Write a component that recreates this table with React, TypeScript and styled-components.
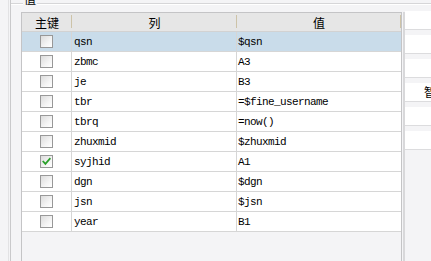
import React from "react";
import styled, { createGlobalStyle } from "styled-components";

const GlobalStyle = createGlobalStyle`
  html, body { margin: 0; padding: 0; background: #f4f4f6; overflow: hidden; }
  * { box-sizing: border-box; }
`;

const CJK = `"Noto Sans CJK SC", "Noto Sans", sans-serif`;
const MONO = `"Liberation Mono", "DejaVu Sans Mono", monospace`;

const Page = styled.div`
  width: 431px;
  height: 261px;
  overflow: hidden;
  display: flex;
  padding-left: 8px;
  background: #f4f4f6;
`;

const OuterEdge = styled.div`
  flex: 1;
  min-width: 0;
  display: flex;
  border-left: 1px solid #e2e2e4;
  padding-left: 1px;
`;

const GroupBox = styled.div`
  flex: 1;
  min-width: 0;
  display: flex;
  flex-direction: column;
  border-left: 1px solid #c9c9cb;
`;

const TitleRow = styled.div`
  display: flex;
  height: 12px;
  flex-shrink: 0;
`;

const EtchLine = styled.div<{ $grow?: boolean }>`
  ${(p) => (p.$grow ? "flex: 1;" : "width: 12px;")}
  height: 0;
  margin-top: 3px;
  border-top: 1px solid #d6d6d8;
  border-bottom: 1px solid #ffffff;
`;

const Title = styled.span`
  font-family: ${CJK};
  font-size: 12px;
  line-height: 12px;
  margin-top: -7px;
  padding: 0 1px;
  color: #000;
`;

const Content = styled.div`
  flex: 1;
  display: flex;
  min-height: 0;
  padding-left: 10px;
`;

const TableFrame = styled.div`
  width: 381px;
  flex-shrink: 0;
  display: flex;
  flex-direction: column;
  border: 1px solid #c4c4c6;
  border-bottom: none;
  background: #f4f4f6;
`;

const COLS = "50px 165px 164px";

const HeaderRow = styled.div`
  display: grid;
  grid-template-columns: ${COLS};
  height: 19px;
  background: #e6e6e6;
  border-bottom: 1px solid #d2d2d2;
`;

const HeaderCell = styled.div`
  display: flex;
  align-items: center;
  justify-content: center;
  font-family: ${CJK};
  font-size: 12px;
  color: #000;
  background: linear-gradient(#cdc3a8, #cdc3a8) no-repeat right 2px / 1px 13px;
`;

const BodyRow = styled.div<{ $selected?: boolean }>`
  display: grid;
  grid-template-columns: ${COLS};
  height: 20px;
  background: ${(p) => (p.$selected ? "#c9dcea" : "#ffffff")};
  border-bottom: 1px solid #d6d6d6;
`;

const Cell = styled.div<{ $pad?: number; $last?: boolean }>`
  display: flex;
  align-items: center;
  padding-left: ${(p) => p.$pad ?? 2}px;
  border-right: ${(p) => (p.$last ? "none" : "1px solid #d6d6d6")};
  font-family: ${MONO};
  font-size: 11px;
  letter-spacing: -0.6px;
  color: #000;
  white-space: nowrap;
  overflow: hidden;
`;

const CheckCell = styled(Cell)`
  justify-content: center;
  padding-left: 0;
`;

const CheckBox = styled.div`
  width: 13px;
  height: 13px;
  border: 1px solid #989898;
  background: linear-gradient(135deg, #dcdcdc 0%, #f4f4f4 60%, #ffffff 100%);
  display: flex;
  align-items: center;
  justify-content: center;
`;

const RightPane = styled.div`
  flex: 1;
  min-width: 0;
  border-left: 2px solid #d8d8da;
  margin-left: 1px;
  display: flex;
  flex-direction: column;
`;

const ButtonList = styled.div`
  display: flex;
  flex-direction: column;
  gap: 5px;
  margin-top: -1px;
`;

const SideButton = styled.div`
  height: 19px;
  background: #ffffff;
  border-bottom: 1px solid #dcdcde;
  font-family: ${CJK};
  font-size: 12px;
  line-height: 18px;
  white-space: nowrap;
  overflow: hidden;
  color: #000;
`;

const ButtonLabel = styled.span<{ $offset: number }>`
  display: inline-block;
  padding-left: ${(p) => p.$offset}px;
`;

type Row = { col: string; val: string; selected?: boolean; checked?: boolean };

const rows: Row[] = [
  { col: "qsn", val: "$qsn", selected: true },
  { col: "zbmc", val: "A3" },
  { col: "je", val: "B3" },
  { col: "tbr", val: "=$fine_username" },
  { col: "tbrq", val: "=now()" },
  { col: "zhuxmid", val: "$zhuxmid" },
  { col: "syjhid", val: "A1", checked: true },
  { col: "dgn", val: "$dgn" },
  { col: "jsn", val: "$jsn" },
  { col: "year", val: "B1" },
];

const sideButtons = [
  { label: "", offset: 40 },
  { label: "", offset: 40 },
  { label: "", offset: 40 },
  { label: "智能添加", offset: 19 },
  { label: "", offset: 40 },
  { label: "", offset: 40 },
];

const CheckMark = () => (
  <svg width="9" height="9" viewBox="0 0 9 9">
    <polyline
      points="1.3,4.6 3.4,6.9 7.8,1.8"
      fill="none"
      stroke="#2aa02a"
      strokeWidth="1.7"
      strokeLinecap="square"
    />
  </svg>
);

export default function App() {
  return (
    <>
      <GlobalStyle />
      <Page>
        <OuterEdge>
          <GroupBox>
            <TitleRow>
              <EtchLine />
              <Title>值</Title>
              <EtchLine $grow />
            </TitleRow>
            <Content>
              <TableFrame>
                <HeaderRow>
                  <HeaderCell>主键</HeaderCell>
                  <HeaderCell>列</HeaderCell>
                  <HeaderCell>值</HeaderCell>
                </HeaderRow>
                {rows.map((r) => (
                  <BodyRow key={r.col} $selected={r.selected}>
                    <CheckCell>
                      <CheckBox>{r.checked && <CheckMark />}</CheckBox>
                    </CheckCell>
                    <Cell $pad={2}>{r.col}</Cell>
                    <Cell $pad={1} $last>
                      {r.val}
                    </Cell>
                  </BodyRow>
                ))}
              </TableFrame>
              <RightPane>
                <ButtonList>
                  {sideButtons.map((b, i) => (
                    <SideButton key={i}>
                      <ButtonLabel $offset={b.offset}>{b.label}</ButtonLabel>
                    </SideButton>
                  ))}
                </ButtonList>
              </RightPane>
            </Content>
          </GroupBox>
        </OuterEdge>
      </Page>
    </>
  );
}
